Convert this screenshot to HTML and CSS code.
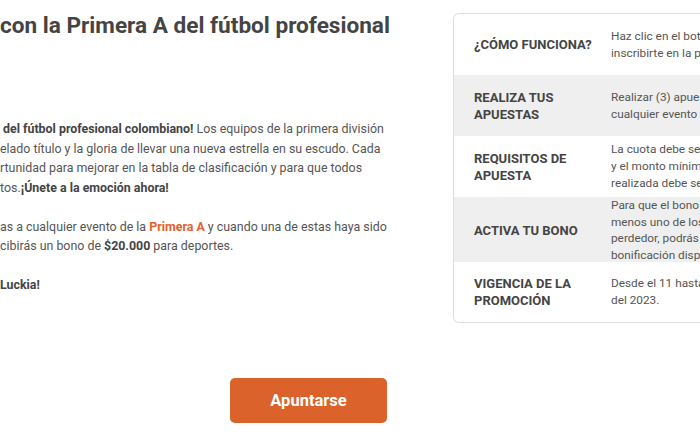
FILE: index.html
```html
<!DOCTYPE html>
<html lang="es">
<head>
<meta charset="utf-8">
<link rel="stylesheet" href="styles.css">
</head>
<body>
<div class="page">
  <main class="promo">
    <h1 class="title">con la Primera A del fútbol profesional</h1>
    <p class="para"><span class="lead"><b>del fútbol profesional colombiano!</b></span> Los equipos de la primera división<br>elado título y la gloria de llevar una nueva estrella en su escudo. Cada<br>rtunidad para mejorar en la tabla de clasificación y para que todos<br>tos.<b>¡Únete a la emoción ahora!</b></p>
    <p class="para">as a cualquier evento de la <b class="accent">Primera A</b> y cuando una de estas haya sido<br>cibirás un bono de <b>$20.000</b> para deportes.</p>
    <p class="para"><b>Luckia!</b></p>
    <div class="cta-row"><button class="cta">Apuntarse</button></div>
  </main>
  <aside class="card">
    <div class="row">
      <div class="head">¿CÓMO FUNCIONA?</div>
      <div class="desc">Haz clic en el botón Apuntarse para<br>inscribirte en la promoción.</div>
    </div>
    <div class="row alt">
      <div class="head">REALIZA TUS<br>APUESTAS</div>
      <div class="desc">Realizar (3) apuestas deportivas a<br>cualquier evento de la Primera A.</div>
    </div>
    <div class="row">
      <div class="head">REQUISITOS DE<br>APUESTA</div>
      <div class="desc">La cuota debe ser mínima de 1.50<br>y el monto mínimo de cada apuesta<br>realizada debe ser de $10.000.</div>
    </div>
    <div class="row alt tall">
      <div class="head">ACTIVA TU BONO</div>
      <div class="desc">Para que el bono se active, al<br>menos uno de los tickets debe ser<br>perdedor, podrás disfrutar de tu<br>bonificación disponible.</div>
    </div>
    <div class="row last">
      <div class="head">VIGENCIA DE LA<br>PROMOCIÓN</div>
      <div class="desc">Desde el 11 hasta el 30 de agosto<br>del 2023.</div>
    </div>
  </aside>
</div>
</body>
</html>
```
FILE: styles.css
```css
html, body {
  margin: 0;
  padding: 0;
  background: #ffffff;
  overflow: hidden;
}
body {
  width: 700px;
  height: 441px;
  font-family: Roboto, "Liberation Sans", sans-serif;
  color: #555555;
}
.page {
  display: flex;
  align-items: flex-start;
  width: 1000px;
}
.promo {
  width: 420px;
  flex: none;
}
.title {
  margin: 12px 0 0 0;
  font-size: 22.6px;
  line-height: 28px;
  font-weight: 700;
  color: #444444;
  white-space: nowrap;
}
.para {
  margin: 0 0 19.5px 0;
  font-size: 12.4px;
  line-height: 19.5px;
  white-space: nowrap;
}
.promo .para:first-of-type {
  margin-top: 79px;
}
.para b {
  color: #444444;
}
.lead {
  padding-left: 3px;
}
.para b.accent {
  color: #e2622a;
}
.cta-row {
  padding-left: 230px;
  padding-top: 64px;
}
.cta {
  width: 157px;
  height: 45px;
  border: none;
  border-radius: 5px;
  background: #dc622b;
  color: #ffffff;
  font-family: Roboto, "Liberation Sans", sans-serif;
  font-size: 16.5px;
  font-weight: 700;
}
.card {
  flex: none;
  margin-left: 33px;
  margin-top: 13px;
  width: 420px;
  border: 1px solid #dcdcdc;
  border-radius: 6px;
  overflow: hidden;
}
.row {
  display: grid;
  grid-template-columns: 157px 1fr;
  align-items: center;
  height: 61px;
}
.row.tall {
  height: 65px;
}
.row.last {
  height: 60px;
}
.row.alt {
  background: #efefef;
}
.head {
  padding-left: 20px;
  font-size: 13px;
  line-height: 17px;
  font-weight: 700;
  color: #444444;
}
.desc {
  font-size: 11.8px;
  line-height: 16.7px;
  color: #555555;
  white-space: nowrap;
}
```
